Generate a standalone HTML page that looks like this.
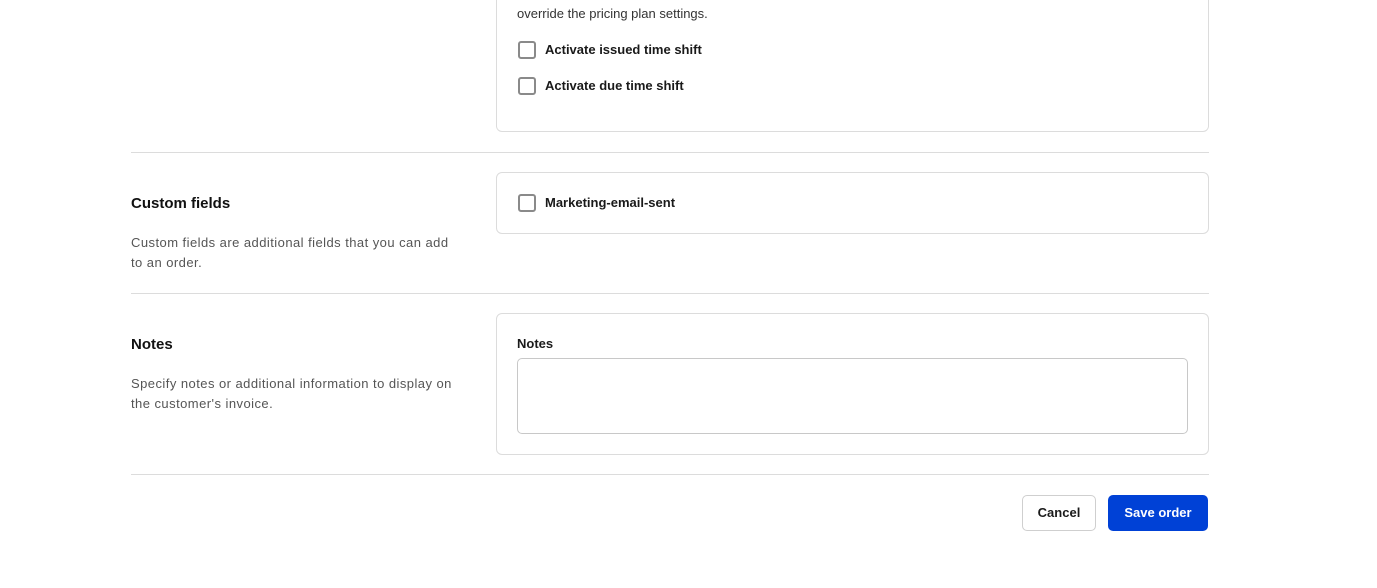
<!DOCTYPE html>
<html><head><meta charset="utf-8"><style>
*{box-sizing:border-box;margin:0;padding:0}
body{width:1377px;height:588px;background:#fff;font-family:"Liberation Sans",Arial,sans-serif;color:#1a1a1a;position:relative;overflow:hidden}
.abs{position:absolute}
.card{position:absolute;left:496px;width:713px;border:1px solid #dcdcdc;border-radius:6px;background:#fff}
.hr{position:absolute;left:131px;width:1078px;height:1px;background:#dcdcdc}
.cb{position:absolute;width:18px;height:18px;border:2px solid #8a8a8a;border-radius:3px}
.lbl{position:absolute;font-size:13px;font-weight:bold;color:#1a1a1a}
.h{position:absolute;left:131px;font-size:15px;font-weight:bold;color:#111}
.d{position:absolute;left:131px;font-size:13px;color:#555;line-height:20px;white-space:nowrap;letter-spacing:.45px}
</style></head><body>
<div class="card" style="top:-10px;height:142px"></div>
<div class="abs" style="left:517px;top:6px;font-size:13px;color:#333">override the pricing plan settings.</div>
<div class="cb" style="left:518px;top:41px"></div><div class="lbl" style="left:545px;top:42px">Activate issued time shift</div>
<div class="cb" style="left:518px;top:77px"></div><div class="lbl" style="left:545px;top:78px">Activate due time shift</div>
<div class="hr" style="top:152px"></div>
<div class="h" style="top:195px">Custom fields</div>
<div class="d" style="top:233px">Custom fields are additional fields that you can add<br>to an order.</div>
<div class="card" style="top:172px;height:62px"></div>
<div class="cb" style="left:518px;top:194px"></div><div class="lbl" style="left:545px;top:195px">Marketing-email-sent</div>
<div class="hr" style="top:293px"></div>
<div class="h" style="top:336px">Notes</div>
<div class="d" style="top:374px">Specify notes or additional information to display on<br>the customer's invoice.</div>
<div class="card" style="top:313px;height:142px"></div>
<div class="lbl" style="left:517px;top:336px;font-size:13px">Notes</div>
<div class="abs" style="left:517px;top:358px;width:671px;height:76px;border:1px solid #c8c8c8;border-radius:5px"></div>
<div class="hr" style="top:474px"></div>
<div class="abs" style="left:1022px;top:495px;width:74px;height:36px;border:1px solid #cfcfcf;border-radius:5px;font-size:13px;font-weight:bold;text-align:center;line-height:34px">Cancel</div>
<div class="abs" style="left:1108px;top:495px;width:100px;height:36px;background:#0041d6;border-radius:5px;font-size:13px;font-weight:bold;color:#fff;text-align:center;line-height:36px">Save order</div>
</body></html>
